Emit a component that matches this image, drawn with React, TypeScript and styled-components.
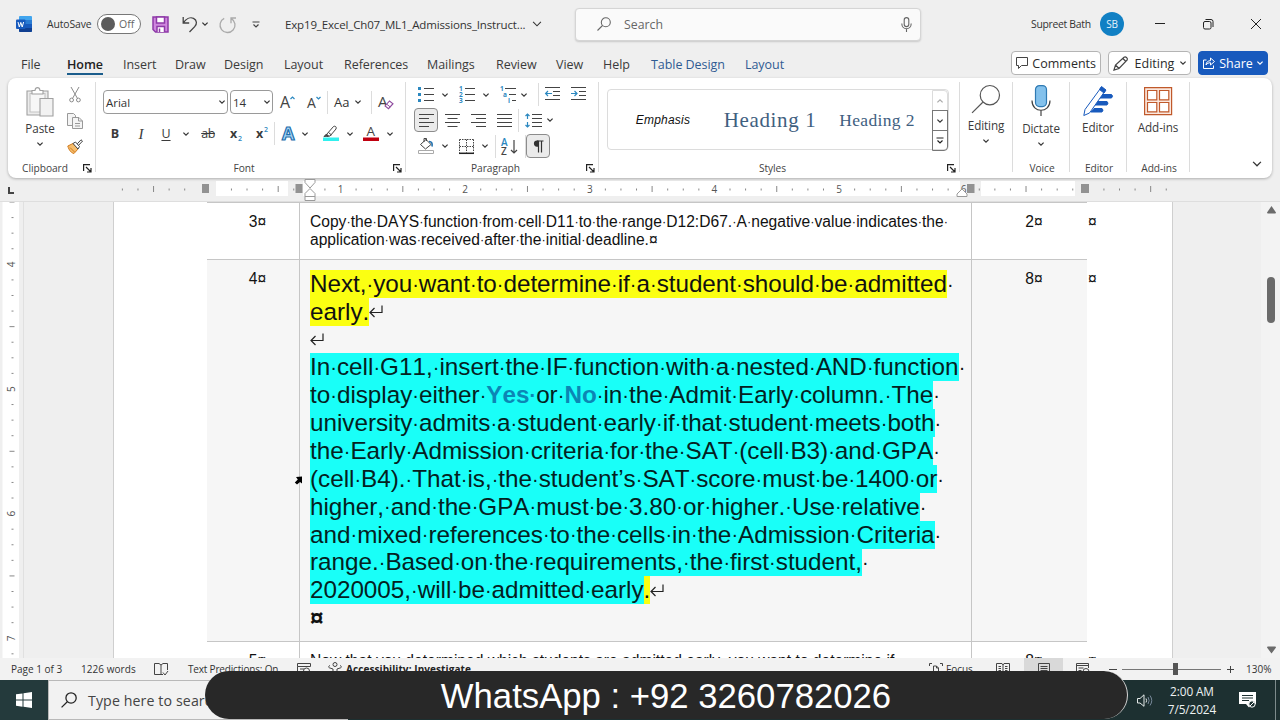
import styled, { createGlobalStyle, css } from 'styled-components';
import type { ReactNode } from 'react';

const GlobalStyle = createGlobalStyle`
  * {
    box-sizing: border-box;
  }
  body {
    margin: 0;
    overflow: hidden;
    background: #efefef;
    font-family: 'Open Sans', 'Noto Sans', sans-serif;
    color: #333;
  }
  svg {
    display: block;
    flex: none;
    overflow: visible;
  }
`;

const Window = styled.div`
  position: relative;
  width: 1280px;
  height: 720px;
  display: flex;
  flex-direction: column;
  overflow: hidden;
  background: #efefef;
`;

const Row = styled.div<{ $h?: number }>`
  display: flex;
  align-items: center;
  height: ${(p) => (p.$h ? `${p.$h}px` : 'auto')};
`;

// fixed width slot, keeps toolbars aligned whatever the label is
const Slot = styled.div<{ $w: number; $ml?: number; $left?: boolean }>`
  flex: none;
  width: ${(p) => p.$w}px;
  margin-left: ${(p) => p.$ml ?? 0}px;
  display: flex;
  align-items: center;
  justify-content: ${(p) => (p.$left ? 'flex-start' : 'center')};
  white-space: nowrap;
`;

const Label = styled.span<{ $size?: number; $ls?: number; $color?: string }>`
  font-size: ${(p) => p.$size ?? 12.3}px;
  letter-spacing: ${(p) => p.$ls ?? 0}px;
  color: ${(p) => p.$color ?? '#333'};
  white-space: nowrap;
`;

/* ---------- title bar ---------- */

const TitleBar = styled.header`
  height: 48px;
  flex: none;
  display: flex;
  align-items: center;
  padding-left: 16px;
`;

const Toggle = styled.div`
  width: 44px;
  height: 20px;
  border: 1px solid #777;
  border-radius: 10px;
  background: #fff;
  display: flex;
  align-items: center;
  gap: 4px;
  padding-left: 3px;
  font-size: 10.5px;
  color: #666;

  &::before {
    content: '';
    width: 14px;
    height: 14px;
    border-radius: 50%;
    background: #5c5c5c;
  }
`;

const SearchBox = styled.div`
  width: 346px;
  height: 33px;
  margin-left: 32px;
  padding: 0 8px 0 21px;
  display: flex;
  align-items: center;
  background: #fafafa;
  border: 1px solid #d5d5d5;
  border-radius: 4px;
  box-shadow: 0 1px 2px rgba(0, 0, 0, 0.16);

  span {
    flex: 1;
    margin-left: 13px;
  }
`;

const Avatar = styled.div`
  width: 24px;
  height: 24px;
  margin-left: 8px;
  border-radius: 50%;
  background: #1180c4;
  color: #e4f2fb;
  font-size: 10px;
  letter-spacing: -0.2px;
  display: flex;
  align-items: center;
  justify-content: center;
`;

/* ---------- tabs ---------- */

const TabBar = styled.nav`
  height: 30px;
  flex: none;
  display: flex;
  align-items: center;
`;

const Tabs = styled.div`
  width: 990px;
  padding-left: 21px;
  display: grid;
  grid-template-columns: 46px 56px 52px 49px 60px 60px 83px 69px 60px 47px 48px 94px 60px;
`;

const Tab = styled.div<{ $active?: boolean; $context?: boolean }>`
  justify-self: start;
  height: 23px;
  line-height: 25px;
  font-size: 12.5px;
  white-space: nowrap;
  letter-spacing: -0.05px;
  color: ${(p) => (p.$context ? '#2f5b93' : '#3b3b3b')};
  ${(p) =>
    p.$active &&
    css`
      font-weight: 600;
      color: #222;
      letter-spacing: -0.05px;
      border-bottom: 2px solid #1b5d8c;
    `}
`;

const ActionButton = styled.div<{ $w: number; $ml: number; $primary?: boolean }>`
  width: ${(p) => p.$w}px;
  height: 24px;
  margin-left: ${(p) => p.$ml}px;
  padding: 0 4px;
  display: flex;
  align-items: center;
  justify-content: space-between;
  border: 1px solid ${(p) => (p.$primary ? '#185abd' : '#b4b4b4')};
  border-radius: 4px;
  background: ${(p) => (p.$primary ? '#185abd' : '#fff')};
  color: ${(p) => (p.$primary ? '#fff' : '#2b2b2b')};
  font-size: 12.5px;
  white-space: nowrap;
`;

/* ---------- ribbon ---------- */

const Ribbon = styled.section`
  height: 100px;
  flex: none;
  margin: 0 8px;
  display: grid;
  grid-template-columns: 88px 310px 193px 361px 53px 57px 57px 63px 1fr;
  background: #fff;
  border-radius: 8px;
  box-shadow: 0 1px 3px rgba(0, 0, 0, 0.28);
`;

const GroupBox = styled.div`
  height: 90px;
  margin-top: 4px;
  display: flex;
  flex-direction: column;
  border-right: 1px solid #dcdcdc;
`;

const GroupBody = styled.div`
  height: 78px;
  flex: none;
  display: flex;
  flex-direction: column;
`;

const GroupFooter = styled.div`
  height: 16px;
  display: grid;
  grid-template-columns: 1fr auto;
  align-items: center;
  padding-left: 2px;
  font-size: 10.2px;
  line-height: 16px;
  letter-spacing: -0.05px;
  text-align: center;
  color: #444;
`;

const BigButton = styled.div<{ $top?: number; $gap?: number }>`
  display: flex;
  flex-direction: column;
  align-items: center;
  padding-top: ${(p) => p.$top ?? 0}px;
  font-size: 11.7px;
  line-height: 17px;
  letter-spacing: -0.1px;
  color: #3b3b3b;
  white-space: nowrap;

  span {
    margin-top: ${(p) => p.$gap ?? 2}px;
  }
  span + svg {
    margin-top: 5px;
  }
`;

const ClipboardBody = styled.div`
  display: grid;
  grid-template-columns: 64px 6px;
  height: 78px;
`;

const IconStack = styled.div`
  display: flex;
  flex-direction: column;
  align-items: center;
  gap: 10px;
  padding-top: 5px;
`;

const Combo = styled.div<{ $w: number; $ml: number }>`
  width: ${(p) => p.$w}px;
  height: 24px;
  flex: none;
  margin-left: ${(p) => p.$ml}px;
  padding: 0 2px;
  display: flex;
  align-items: center;
  justify-content: space-between;
  border: 1px solid #9a9a9a;
  border-radius: 4px;
  font-size: 11.5px;
`;

const Divider = styled.div<{ $ml?: number }>`
  width: 1px;
  height: 23px;
  flex: none;
  margin-left: ${(p) => p.$ml ?? 0}px;
  background: #dcdcdc;
`;

const Pressed = styled.div`
  width: 24px;
  height: 24px;
  display: flex;
  align-items: center;
  justify-content: center;
  border: 1px solid #8c8c8c;
  border-radius: 4px;
  background: #ebebeb;
`;

const Glyph = styled.span<{ $kind?: 'bold' | 'italic' | 'underline' | 'strike' }>`
  font-size: 12.5px;
  line-height: 16px;
  color: #3b3b3b;
  ${(p) => p.$kind === 'bold' && 'font-weight: 700;'}
  ${(p) => p.$kind === 'italic' && "font-style: italic; font-family: 'Liberation Serif', serif; font-size: 15px;"}
  ${(p) => p.$kind === 'underline' && 'text-decoration: underline; text-underline-offset: 2px;'}
  ${(p) => p.$kind === 'strike' && 'text-decoration: line-through; letter-spacing: -0.5px;'}

  sub,
  sup {
    font-size: 7px;
    line-height: 0;
    font-weight: 600;
    color: #2b88c0;
    margin-left: 1px;
  }
`;

const Gallery = styled.div`
  width: 342px;
  height: 61px;
  margin: 7px 0 0 8px;
  display: grid;
  grid-template-columns: 110px 104px 110px 16px;
  border: 1px solid #dcdcdc;
  border-radius: 4px;
  align-items: center;
  justify-items: center;
`;

const GalleryScroll = styled.div`
  width: 16px;
  height: 61px;
  display: grid;
  grid-template-rows: 21px 20px 20px;

  div {
    display: flex;
    align-items: center;
    justify-content: center;
    border: 1px solid #777;
    margin-top: -1px;
  }
  div:first-child {
    margin-top: 0;
    border-color: #dcdcdc;
    border-radius: 0 4px 0 0;
  }
  div:last-child {
    border-radius: 0 0 4px 0;
  }
`;

const StyleName = styled.span<{ $size: number; $ls: number; $serif?: boolean }>`
  font-family: ${(p) => (p.$serif ? "'Liberation Serif', serif" : "'Liberation Sans', sans-serif")};
  font-size: ${(p) => p.$size}px;
  letter-spacing: ${(p) => p.$ls}px;
  font-style: ${(p) => (p.$serif ? 'normal' : 'italic')};
  color: ${(p) => (p.$serif ? '#3f607f' : '#111')};
  padding-bottom: ${(p) => (p.$serif ? 0 : 2)}px;
  white-space: nowrap;
`;

/* ---------- document ---------- */

const Workspace = styled.main`
  height: 457px;
  flex: none;
  display: flex;
  overflow: hidden;
  border-top: 1px solid #dedede;
`;

const SideRuler = styled.div`
  width: 24px;
  flex: none;
  border-right: 1px solid #e0e0e0;
`;

const Page = styled.article`
  width: 1060px;
  flex: none;
  margin-left: 89px;
  padding-left: 93px;
  background: #fff;
  border: 1px solid #cfcfcf;
  border-width: 0 1px;
`;

const TableRow = styled.div<{ $h: number; $shade?: boolean }>`
  height: ${(p) => p.$h}px;
  display: grid;
  grid-template-columns: 880px 1fr;
  font-family: 'Liberation Sans', Arial, sans-serif;
  font-size: 15.6px;
  font-kerning: none;
  line-height: 18px;
  color: #111;

  > div:first-child {
    display: grid;
    grid-template-columns: 93px 672px 115px;
    border-top: 1px solid #c6c6c6;
    background: ${(p) => (p.$shade ? '#f6f6f6' : '#fff')};
  }
`;

const Cell = styled.div<{ $body?: boolean }>`
  padding-top: 10px;
  text-align: ${(p) => (p.$body ? 'left' : 'center')};
  padding-left: ${(p) => (p.$body ? 10 : 9)}px;
  border-right: 1px solid #c6c6c6;
  white-space: nowrap;

  &:last-child {
    border-right: none;
  }
`;

const RowEnd = styled.div`
  padding: 11px 0 0 1px;
`;

const Dot = styled.span`
  margin: 0 0.003em;
  font-size: 0.82em;
  line-height: 0;
  vertical-align: 0.06em;
`;

const Line = styled.div<{ $ls?: number }>`
  height: 27.85px;
  display: flex;
  align-items: center;
  font-size: 24.27px;
  line-height: 27.85px;
  letter-spacing: ${(p) => p.$ls ?? 0}px;
`;

const SmallLine = styled.div`
  height: 18px;
`;

const Mark = styled.span<{ $tone: 'yellow' | 'cyan' }>`
  height: 28px;
  background: ${(p) => (p.$tone === 'yellow' ? '#fbff12' : '#19fff8')};
  color: ${(p) => (p.$tone === 'yellow' ? '#111' : '#04211f')};
`;

const Keyword = styled.b`
  color: #0c86b4;
`;

const ScrollBar = styled.div`
  width: 19px;
  margin-left: auto;
  padding: 4px 0 4px 1px;
  display: flex;
  flex-direction: column;
  align-items: center;
  background: #f3f3f3;
`;

const Thumb = styled.div`
  width: 8px;
  height: 46px;
  margin: 63px 0 auto;
  border-radius: 4px;
  background: #6b6b6b;
`;

const Pointer = styled.div`
  position: absolute;
  left: 294px;
  top: 475px;
`;

/* ---------- status bar and taskbar ---------- */

const StatusBar = styled.footer`
  height: 22px;
  flex: none;
  display: flex;
  align-items: center;
  padding-left: 11px;
  background: #f2f2f2;
`;

const ActiveView = styled.div`
  width: 39px;
  height: 22px;
  margin-left: 14px;
  display: flex;
  align-items: center;
  justify-content: center;
  background: #d9d9d9;
`;

const ZoomTrack = styled.div`
  width: 99px;
  height: 12px;
  margin: 0 5px;
  display: flex;
  align-items: center;
  padding-left: 51px;
  background: linear-gradient(#777, #777) center / 100% 1px no-repeat;

  &::before {
    content: '';
    width: 5px;
    height: 12px;
    background: #555;
  }
`;

const TaskBar = styled.footer`
  height: 40px;
  flex: none;
  display: flex;
  background: #1d3031;
`;

const StartButton = styled.div`
  width: 48px;
  display: flex;
  align-items: center;
  justify-content: center;
  background: #243a3c;
`;

const TaskSearch = styled.div`
  width: 300px;
  padding-left: 12px;
  display: flex;
  align-items: center;
  gap: 11px;
  background: #f2f2f2;
  border: 1px solid #b9b9b9;
  border-right: none;
`;

const Tray = styled.div`
  margin-left: auto;
  display: flex;
  align-items: center;
  color: #eef2f2;
`;

const Clock = styled.div`
  width: 56px;
  margin-left: 11px;
  font-size: 11.8px;
  line-height: 18.5px;
  letter-spacing: -0.1px;
  text-align: center;
  white-space: nowrap;
`;

const Banner = styled.div`
  position: absolute;
  left: 205px;
  top: 671px;
  width: 923px;
  height: 48px;
  display: flex;
  align-items: center;
  justify-content: center;
  border-radius: 24px;
  background: #282828;
  border-right: 1px solid #d8d8d8;
  font-family: 'Liberation Sans', Arial, sans-serif;
  font-size: 34.7px;
  color: #fff;
  padding-top: 3px;
`;

/* ---------- icons ---------- */

type SvgProps = { w: number; h: number; children: ReactNode; stroke?: string; sw?: number };

const Svg = ({ w, h, children, stroke = '#444', sw = 1 }: SvgProps) => (
  <svg width={w} height={h} viewBox={`0 0 ${w} ${h}`} fill="none" stroke={stroke} strokeWidth={sw}>
    {children}
  </svg>
);

const Chevron = ({ w = 6, color = '#333', sw = 1.2, up = false }) => (
  <svg width={w} height={w / 2 + 1} viewBox="0 0 6 4" fill="none" stroke={color} strokeWidth={(sw * 6) / w}>
    <path d={up ? 'M.4 3.4 3 .8l2.6 2.6' : 'M.4.6 3 3.2 5.6.6'} />
  </svg>
);

const WordLogo = () => (
  <Svg w={16} h={16} stroke="none">
    <rect x="3" width="13" height="16" rx="1" fill="#41a5ee" />
    <path d="M3 4h13v4H3z" fill="#2b7cd3" />
    <path d="M3 8h13v4H3z" fill="#185abd" />
    <path d="M3 12h13v3a1 1 0 0 1-1 1H4a1 1 0 0 1-1-1z" fill="#103f91" />
    <rect y="3.5" width="9.5" height="9.5" rx="1" fill="#185abd" />
    <path d="m2 6 1.3 5 1.5-4.6L6.2 11 7.6 6" stroke="#fff" />
  </Svg>
);

const SaveIcon = () => (
  <Svg w={17} h={17} stroke="#8e3aa8" sw={1.5}>
    <path d="M1 1h15v15H3.5L1 13.5z" fill="#cf87de" />
    <path d="M4.5 1h8v6h-8z" fill="#fff" />
    <path d="M5 16v-5.5h7.5V16" fill="#fff" />
    <path d="M7.5 12.5V16" />
  </Svg>
);

const UndoIcon = () => (
  <Svg w={16} h={17} sw={1.3}>
    <path d="M1.2 1v6h6M1.5 6.7C4 2.8 8 .8 11.500 2.300c3.7 1.7 3.600 6 1.200 8.300L7.500 16" />
  </Svg>
);

const RedoIcon = () => (
  <Svg w={17} h={17} stroke="#aaa" sw={1.3}>
    <path d="M5.2 2.3a7.500 7.500 0 1 0 7.200.3M12 7.300V2h5" />
  </Svg>
);

const SearchIcon = ({ size = 14, color = '#666', sw = 1.1 }) => (
  <svg width={size} height={size} viewBox="0 0 14 14" fill="none" stroke={color} strokeWidth={sw}>
    <circle cx="8.8" cy="5.2" r="4.5" />
    <path d="M5.5 8.500.5 13.500" />
  </svg>
);

const MicIcon = () => (
  <Svg w={11} h={15} stroke="#666" sw={1.1}>
    <rect x="3.2" y=".6" width="4.6" height="9" rx="2.3" />
    <path d="M.8 6.500c0 7 9.400 7 9.400 0M5.500 11.800V15" />
  </Svg>
);

const PasteIcon = () => (
  <Svg w={28} h={30} stroke="#a0a0a0" sw={1.1}>
    <path d="M1 4h21v24H1z" fill="#ececec" />
    <path d="M4 6.500h15V25H4z" fill="#f7f7f7" stroke="#c4c4c4" />
    <path d="M6 7V3.500h3C9.500-.3 13.500-.3 14 3.500h3V7z" fill="#fff" />
    <path d="M14 11.500h13V29H14z" fill="#f2f2f2" />
  </Svg>
);

const CutIcon = () => (
  <Svg w={12} h={16} stroke="#8a8a8a">
    <path d="M2 0l6.500 11.500M10 0 3.500 11.500" />
    <circle cx="2.600" cy="13" r="1.900" />
    <circle cx="9.400" cy="13" r="1.900" />
  </Svg>
);

const CopyIcon = () => (
  <Svg w={16} h={16} stroke="#999">
    <path d="M5 12.500H.5V.5h6l2 2v2" fill="#f4f4f4" />
    <path d="M5.500 4.500H12L15.500 8v7.500h-10z" fill="#f4f4f4" />
    <path d="M11.500 4.500V8h4M8 10.500h5M8 13h5" />
  </Svg>
);

const PainterIcon = () => (
  <Svg w={16} h={15}>
    <path d="M.8 7 6 4.500l5 5.500-4 4.500C4.500 14 2 11.500.8 7z" fill="#f6bd6c" stroke="#d27b1d" />
    <path d="M3 8.500 7.500 13" stroke="#d27b1d" />
    <path d="M6 4.500 8.500 3l4 4.500L11 10zM10.300 4.800 14 .8l1.500 1.300-3.700 4" fill="#fff" />
  </Svg>
);

const Launcher = () => (
  <Svg w={9} h={9} stroke="#222" sw={1.2}>
    <path d="M.6 7V.6H7M3 3l4.500 4.500M8 4v4H4" />
  </Svg>
);

const ShrinkGrow = ({ grow = false }) => (
  <Svg w={16} h={16} stroke="none">
    <text x="0" y="14" fontSize={grow ? 16 : 14} fill="#444">
      A
    </text>
    <path d={grow ? 'M10.500 5 12.500 3l2 2' : 'M9.500 3l2 2 2-2'} stroke="#2b88c0" strokeWidth="1.200" />
  </Svg>
);

const ClearIcon = () => (
  <Svg w={16} h={16} stroke="none">
    <text x="0" y="12.500" fontSize="15" fill="#444">
      A
    </text>
    <path d="m7 12 4.500-5 3.500 2.700-4.500 5z" fill="#fff" stroke="#8e4a9e" strokeWidth="1.100" />
    <path d="m8.700 10.200 3.500 2.700" stroke="#8e4a9e" />
  </Svg>
);

const EffectsIcon = () => (
  <Svg w={15} h={15} stroke="#1f6fae" sw={1.2}>
    <text x="1" y="14" fontSize="18" fontWeight="700" fill="#a9d6f5">
      A
    </text>
  </Svg>
);

const HighlightIcon = () => (
  <Svg w={16} h={17}>
    <path d="M3.500 9.500 10.500 1.500c1.500-1 3.500.5 2.500 2.500L7 11l-3 .5zM5.500 7.500l3 2.500" fill="#fff" />
    <path d="M1 11.500 3.500 9l2 2z" fill="#444" />
    <path d="M0 12.500h16V16H0z" fill="#30f0ee" stroke="none" />
  </Svg>
);

const FontColorIcon = () => (
  <Svg w={16} h={17} stroke="none">
    <text x="3.500" y="11" fontSize="13.500" fill="#444">
      A
    </text>
    <path d="M0 12.500h16V16H0z" fill="#c00010" />
  </Svg>
);

const BulletsIcon = () => (
  <Svg w={16} h={16}>
    <path d="M6 1.500h10M6 7.500h10M6 13.500h10" />
    <path d="M0 0h3v3H0zM0 6h3v3H0zM0 12h3v3H0z" fill="#2b88c0" stroke="none" />
  </Svg>
);

const NumberIcon = () => (
  <Svg w={16} h={16}>
    <path d="M6 1.500h10M6 7.500h10M6 13.500h10" />
    <g fill="#2b88c0" stroke="none" fontSize="6.500" fontWeight="700">
      <text x="0" y="4">1</text>
      <text x="0" y="10">2</text>
      <text x="0" y="16">3</text>
    </g>
  </Svg>
);

const MultiIcon = () => (
  <Svg w={16} h={16}>
    <path d="M5 1.500h11M9 7.500h7M12 13.500h4" />
    <g fill="#2b88c0" stroke="none" fontSize="6.500" fontWeight="700">
      <text x="0" y="4">1</text>
      <text x="3" y="10">a</text>
      <text x="8" y="16">i</text>
    </g>
  </Svg>
);

const IndentIcon = ({ out = false }) => (
  <Svg w={15} h={15}>
    <path d="M0 .5h15M8 4.500h7M8 8.500h7M0 12.500h15" />
    <path d={out ? 'M7 6.500H.7M3 4 .6 6.500 3 9' : 'M0 6.500h6M3.500 4 6 6.500 3.500 9'} stroke="#2b88c0" strokeWidth="1.200" />
  </Svg>
);

const aligns = {
  left: 'M0 1.500h15M0 5.500h10M0 9.500h15M0 13.500h10',
  center: 'M0 1.500h15M2.500 5.500h10M0 9.500h15M2.500 13.500h10',
  right: 'M0 1.500h15M5 5.500h10M0 9.500h15M5 13.500h10',
  full: 'M0 1.500h15M0 5.500h15M0 9.500h15M0 13.500h15',
};

const AlignIcon = ({ kind }: { kind: keyof typeof aligns }) => (
  <Svg w={15} h={15}>
    <path d={aligns[kind]} />
  </Svg>
);

const SpacingIcon = () => (
  <Svg w={17} h={15}>
    <path d="M7 1.500h10M7 5.500h10M7 9.500h10M7 13.500h10" />
    <path d="M2.500 6V1M.5 3l2-2 2 2M2.500 9v5M.5 12l2 2 2-2" stroke="#2b88c0" strokeWidth="1.200" />
  </Svg>
);

const BucketIcon = () => (
  <Svg w={16} h={16}>
    <path d="M2.500 6.500 8 1.500l5 5L7.500 11zM6 4V.5h2.500V3" />
    <path d="M11 3.500c3 0 3.500 2 3 5" stroke="#1f6fae" strokeWidth="1.600" />
    <path d="M.5 12.500h15v3H.5z" fill="#fff" stroke="#aaa" />
  </Svg>
);

const BordersIcon = () => (
  <Svg w={15} h={15}>
    <path d="M.5.5h14M.5 7.500h14M.5.5v13M7.500.5v13M14.500.5v13" strokeDasharray="1.500 1" />
    <path d="M0 14.300h15" strokeWidth="1.500" stroke="#222" />
  </Svg>
);

const SortIcon = () => (
  <Svg w={17} h={17}>
    <text x="0" y="8" fontSize="10" fontWeight="600" fill="#2b88c0" stroke="none">A</text>
    <text x="0" y="16.500" fontSize="10" fontWeight="600" fill="#444" stroke="none">Z</text>
    <path d="M13 2v13M10 12l3 3 3-3" strokeWidth="1.200" />
  </Svg>
);

const PilcrowIcon = () => (
  <Svg w={11} h={13} stroke="#333" sw={1.2}>
    <path d="M10.500 1H4M5.500 1v11.500M8.500 1v11.500" />
    <path d="M5.500.5H4a3 3 0 0 0 0 6.200h1.500z" fill="#333" stroke="none" />
  </Svg>
);

const DictateIcon = () => (
  <Svg w={20} h={32} sw={1.2}>
    <rect x="4.500" y=".6" width="11" height="21" rx="4" fill="#83c1ec" stroke="#2f7ab3" />
    <path d="M1 15.500c0 13 18 13 18 0M10 25.500V31" />
  </Svg>
);

const EditorIcon = () => (
  <Svg w={30} h={31} stroke="#185abd">
    <path d="M17 8.500h11.500q2 1.500 0 3.500H15zM14 15.500h10q2 1.500 0 3.500H12zM11 22.500h8q2 1.500 0 3.500H8z" fill="#185abd" />
    <path d="M18.500 1 22 5 6.500 27 .8 29.500 2 23.500z" fill="#fff" />
    <path d="m16.500 3.500 2-3L23 4l-2 3z" fill="#185abd" />
  </Svg>
);

const AddinsIcon = () => (
  <Svg w={28} h={28} stroke="#c0592b" sw={1.2}>
    <path d="M.6.6h27v27H.6z" fill="#fbe8df" />
    <path d="M3.500 3.500h9.300v9.300H3.500zM15.500 3.500h9.300v9.300h-9.300zM3.500 15.500h9.300v9.300H3.500zM15.500 15.500h9.300v9.300h-9.300z" fill="#fff" />
  </Svg>
);

const CommentIcon = () => (
  <Svg w={12} h={12}>
    <path d="M.5.500h11v8h-6l-3 3v-3h-2z" />
  </Svg>
);

const PenIcon = () => (
  <Svg w={16} h={15} sw={1.2}>
    <path d="m1 14 1.500-5L11 1.200c1.700-1 4 .8 3.200 2.800L6 12.500zM2.500 9 6 12.500M9.800 2.500l3.500 3.300" />
  </Svg>
);

const ShareIcon = () => (
  <Svg w={12} h={12} stroke="#fff">
    <path d="M3.500 3H.5v8.500h10V8.500M3 8c.3-3 2-4.300 4.500-4.300V1L11.500 4.500 7.500 8V5.700C5.500 5.700 4 6.500 3 8z" />
  </Svg>
);

const ReturnMark = () => (
  <Svg w={14} h={13} stroke="#222" sw={1.2}>
    <path d="M13 .5V7.500H1.500M5.500 3 1 7.500 5.500 12" />
  </Svg>
);

const tickAt = (n: number) => 340.5 + n * 15.58;
// ticks covered by the column markers
const hidden = [-9, -8, -2, 40];

const TopRuler = () => (
  <svg width="1280" height="23" viewBox="0 178 1280 23" fill="none">
    <path d="M216 181h72v15h-72zM303 181h657v15H303zM981 181h94v15h-94z" fill="#fff" />
    {Array.from({ length: 68 }, (_, i) => i - 14).map((n) => {
      if (hidden.includes(n)) return null;
      if (n % 8 === 0 && n >= 0)
        return (
          <text key={n} x={tickAt(n)} y="193" fontSize="10" textAnchor="middle" fill="#555">
            {n / 8 + 1 < 7 ? n / 8 + 1 : ''}
          </text>
        );
      const tall = Math.abs(n % 8) === 4;
      return <rect key={n} x={tickAt(n) - 0.5} y={tall ? 186 : 188.5} width="1" height={tall ? 6 : 2} fill="#888" />;
    })}
    <text x="963.500" y="193" fontSize="10" textAnchor="middle" fill="#555">6</text>
    <path d="M202 184h7v9h-7zM295.500 184h7v9h-7zM967 184h7.500v9H967zM1081 184h8v9h-8z" fill="#929292" />
    <path
      d="M305 179.500h10v3l-5 5.500-5-5.500zM305 200.500h10v-7l-5-5-5 5zM305 196.500h10M957 196.500v-2.500l5-5 5 5v2.500z"
      fill="#fff"
      stroke="#9a9a9a"
    />
    <path d="M9 187v6h5" stroke="#444" strokeWidth="2" />
  </svg>
);

const LeftRuler = () => (
  <svg width="22" height="457" viewBox="0 202 22 457" fill="none">
    <path d="M2.500 202H19v457H2.500z" fill="#fff" />
    {Array.from({ length: 30 }, (_, i) => i).map((n) => {
      const y = 202 + n * 15.58;
      if (n % 8 === 4)
        return (
          <text key={n} transform={`translate(15 ${y + 3}) rotate(-90)`} fontSize="10" fill="#555">
            {(n - 4) / 8 + 4}
          </text>
        );
      return <rect key={n} x={n % 8 === 0 ? 9.5 : 11.5} y={y - 0.5} width={n % 8 === 0 ? 5 : 2} height="1" fill="#888" />;
    })}
  </svg>
);

/* ---------- pieces ---------- */

// spaces are shown as formatting dots, with the width of a space
const Dotted = ({ text }: { text: string }) => (
  <>
    {text.split(/( )/).map((part, i) => (part === ' ' ? <Dot key={i}>·</Dot> : part))}
  </>
);

const Group = ({ label, launcher, children }: { label?: string; launcher?: boolean; children: ReactNode }) => (
  <GroupBox>
    <GroupBody>{children}</GroupBody>
    <GroupFooter>
      <span>{label}</span>
      {launcher && (
        <Slot $w={15}>
          <Launcher />
        </Slot>
      )}
    </GroupFooter>
  </GroupBox>
);

const tabs = ['File', 'Home', 'Insert', 'Draw', 'Design', 'Layout', 'References', 'Mailings', 'Review', 'View', 'Help'];

const cyanLines = [
  'university admits a student early if that student meets both',
  'the Early Admission criteria for the SAT (cell B3) and GPA',
  '(cell B4). That is, the student’s SAT score must be 1400 or',
  'higher, and the GPA must be 3.80 or higher. Use relative',
  'and mixed references to the cells in the Admission Criteria',
  'range. Based on the requirements, the first student,',
];

function App() {
  return (
    <>
      <GlobalStyle />
      <Window>
        <TitleBar>
          <WordLogo />
          <Slot $w={45} $ml={15} $left>
            <Label $size={10.4} $ls={-0.1}>
              AutoSave
            </Label>
          </Slot>
          <Slot $w={44} $ml={5}>
            <Toggle>Off</Toggle>
          </Slot>
          <Slot $w={17} $ml={11}>
            <SaveIcon />
          </Slot>
          <Slot $w={16} $ml={13}>
            <UndoIcon />
          </Slot>
          <Slot $w={6} $ml={4}>
            <Chevron />
          </Slot>
          <Slot $w={17} $ml={11}>
            <RedoIcon />
          </Slot>
          <Slot $w={8} $ml={16}>
            <Svg w={8} h={7} sw={1.2}>
              <path d="M.5 1h7M1.500 3.500 4 6l2.500-2.500" />
            </Svg>
          </Slot>
          <Slot $w={242} $ml={25} $left>
            <Label $size={11.5} $ls={-0.15}>
              Exp19_Excel_Ch07_ML1_Admissions_Instruct...
            </Label>
          </Slot>
          <Slot $w={11} $ml={4}>
            <Chevron w={10} />
          </Slot>
          <Slot $w={1} />
          <SearchBox>
            <SearchIcon />
            <Label $color="#666">Search</Label>
            <MicIcon />
          </SearchBox>
          <Slot $w={61} $ml={110} $left>
            <Label $size={10.4} $ls={-0.3}>
              Supreet Bath
            </Label>
          </Slot>
          <Avatar>SB</Avatar>
          <Slot $w={10} $ml={31}>
            <Svg w={10} h={2} stroke="#222">
              <path d="M0 .5h10" />
            </Svg>
          </Slot>
          <Slot $w={10} $ml={38}>
            <Svg w={10} h={10} stroke="#222">
              <rect x=".5" y="2.500" width="7.500" height="7.500" rx="1.500" />
              <path d="M2.500.5H8a2 2 0 0 1 2 2V8" />
            </Svg>
          </Slot>
          <Slot $w={10} $ml={38}>
            <Svg w={10} h={10} stroke="#222">
              <path d="m0 0 10 10M10 0 0 10" />
            </Svg>
          </Slot>
        </TitleBar>

        <TabBar>
          <Tabs>
            {tabs.map((name) => (
              <Tab key={name} $active={name === 'Home'}>
                {name}
              </Tab>
            ))}
            <Tab $context>Table Design</Tab>
            <Tab $context>Layout</Tab>
          </Tabs>
          <ActionButton $w={90} $ml={21}>
            <CommentIcon />
            Comments
          </ActionButton>
          <ActionButton $w={83} $ml={7}>
            <PenIcon />
            Editing
            <Chevron />
          </ActionButton>
          <ActionButton $w={70} $ml={7} $primary>
            <ShareIcon />
            Share
            <Chevron color="#fff" />
          </ActionButton>
        </TabBar>

        <Ribbon>
          <Group label="Clipboard" launcher>
            <ClipboardBody>
              <BigButton $top={5} $gap={3}>
                <PasteIcon />
                <span>Paste</span>
                <Chevron />
              </BigButton>
              <IconStack>
                <CutIcon />
                <CopyIcon />
                <PainterIcon />
              </IconStack>
            </ClipboardBody>
          </Group>

          <Group label="Font" launcher>
            <Row $h={40}>
              <Combo $w={125} $ml={7}>
                Arial
                <Chevron />
              </Combo>
              <Combo $w={43} $ml={2}>
                14
                <Chevron />
              </Combo>
              <Slot $w={16} $ml={7}>
                <ShrinkGrow grow />
              </Slot>
              <Slot $w={16} $ml={11}>
                <ShrinkGrow />
              </Slot>
              <Divider $ml={4} />
              <Slot $w={18} $ml={6} $left>
                <Label $size={13}>Aa</Label>
              </Slot>
              <Slot $w={8} $ml={2}>
                <Chevron />
              </Slot>
              <Divider $ml={9} />
              <Slot $w={16} $ml={6}>
                <ClearIcon />
              </Slot>
            </Row>
            <Row $h={23}>
              <Slot $w={24} $ml={7}>
                <Glyph $kind="bold">B</Glyph>
              </Slot>
              <Slot $w={28}>
                <Glyph $kind="italic">I</Glyph>
              </Slot>
              <Slot $w={22}>
                <Glyph $kind="underline">U</Glyph>
              </Slot>
              <Slot $w={18}>
                <Chevron />
              </Slot>
              <Slot $w={26}>
                <Glyph $kind="strike">ab</Glyph>
              </Slot>
              <Slot $w={30}>
                <Glyph $kind="bold">
                  x<sub>2</sub>
                </Glyph>
              </Slot>
              <Slot $w={22}>
                <Glyph $kind="bold">
                  x<sup>2</sup>
                </Glyph>
              </Slot>
              <Divider $ml={1} />
              <Slot $w={24} $ml={1}>
                <EffectsIcon />
              </Slot>
              <Slot $w={10}>
                <Chevron />
              </Slot>
              <Slot $w={26} $ml={8}>
                <HighlightIcon />
              </Slot>
              <Slot $w={12}>
                <Chevron />
              </Slot>
              <Slot $w={26} $ml={2}>
                <FontColorIcon />
              </Slot>
              <Slot $w={12}>
                <Chevron />
              </Slot>
            </Row>
          </Group>

          <Group label="Paragraph" launcher>
            <Row $h={25}>
              <Slot $w={24} $ml={8}>
                <BulletsIcon />
              </Slot>
              <Slot $w={14}>
                <Chevron />
              </Slot>
              <Slot $w={24} $ml={3}>
                <NumberIcon />
              </Slot>
              <Slot $w={14}>
                <Chevron />
              </Slot>
              <Slot $w={24} $ml={3}>
                <MultiIcon />
              </Slot>
              <Slot $w={8}>
                <Chevron />
              </Slot>
              <Divider $ml={10} />
              <Slot $w={15} $ml={6}>
                <IndentIcon out />
              </Slot>
              <Slot $w={15} $ml={11}>
                <IndentIcon />
              </Slot>
            </Row>
            <Row $h={26}>
              <Slot $w={24} $ml={8}>
                <Pressed>
                  <AlignIcon kind="left" />
                </Pressed>
              </Slot>
              <Slot $w={26} $ml={1}>
                <AlignIcon kind="center" />
              </Slot>
              <Slot $w={26}>
                <AlignIcon kind="right" />
              </Slot>
              <Slot $w={26}>
                <AlignIcon kind="full" />
              </Slot>
              <Divider $ml={1} />
              <Slot $w={17} $ml={6}>
                <SpacingIcon />
              </Slot>
              <Slot $w={8} $ml={4}>
                <Chevron />
              </Slot>
            </Row>
            <Row $h={26}>
              <Slot $w={24} $ml={8}>
                <BucketIcon />
              </Slot>
              <Slot $w={14}>
                <Chevron />
              </Slot>
              <Slot $w={24} $ml={2}>
                <BordersIcon />
              </Slot>
              <Slot $w={14}>
                <Chevron />
              </Slot>
              <Divider $ml={3} />
              <Slot $w={17} $ml={5}>
                <SortIcon />
              </Slot>
              <Divider $ml={7} />
              <Slot $w={24}>
                <Pressed>
                  <PilcrowIcon />
                </Pressed>
              </Slot>
            </Row>
          </Group>

          <Group label="Styles" launcher>
            <Gallery>
              <StyleName $size={12} $ls={0.2}>
                Emphasis
              </StyleName>
              <StyleName $size={21} $ls={0.65} $serif>
                Heading 1
              </StyleName>
              <StyleName $size={17.5} $ls={0.35} $serif>
                Heading 2
              </StyleName>
              <GalleryScroll>
                <div>
                  <Chevron color="#aaa" up />
                </div>
                <div>
                  <Chevron />
                </div>
                <div>
                  <Svg w={8} h={7} sw={1.2} stroke="#222">
                    <path d="M.5 1h7M1.500 3.500 4 6l2.500-2.500" />
                  </Svg>
                </div>
              </GalleryScroll>
            </Gallery>
          </Group>

          <Group>
            <BigButton $top={2} $gap={3}>
              <SearchIcon size={30} color="#555" sw={0.55} />
              <span>Editing</span>
              <Chevron />
            </BigButton>
          </Group>
          <Group label="Voice">
            <BigButton $top={3} $gap={3}>
              <DictateIcon />
              <span>Dictate</span>
              <Chevron />
            </BigButton>
          </Group>
          <Group label="Editor">
            <BigButton $top={4} $gap={2}>
              <EditorIcon />
              <span>Editor</span>
            </BigButton>
          </Group>
          <Group label="Add-ins">
            <BigButton $top={5} $gap={4}>
              <AddinsIcon />
              <span>Add-ins</span>
            </BigButton>
          </Group>
          <Row $h={172}>
            <Slot $w={12} $ml={61}>
              <Chevron w={10} sw={1.4} />
            </Slot>
          </Row>
        </Ribbon>

        <TopRuler />

        <Workspace>
          <SideRuler>
            <LeftRuler />
          </SideRuler>
          <Page>
            <TableRow $h={57}>
              <div>
                <Cell>3¤</Cell>
                <Cell $body>
                  <SmallLine>
                    <Dotted text="Copy the DAYS function from cell D11 to the range D12:D67. A negative value indicates the " />
                  </SmallLine>
                  <SmallLine>
                    <Dotted text="application was received after the initial deadline." />¤
                  </SmallLine>
                </Cell>
                <Cell>2¤</Cell>
              </div>
              <RowEnd>¤</RowEnd>
            </TableRow>
            <TableRow $h={382} $shade>
              <div>
                <Cell>4¤</Cell>
                <Cell $body>
                  <Line $ls={-0.04}>
                    <Mark $tone="yellow">
                      <Dotted text="Next, you want to determine if a student should be admitted" />
                    </Mark>
                    <Dot>·</Dot>
                  </Line>
                  <Line>
                    <Mark $tone="yellow">early.</Mark>
                    <ReturnMark />
                  </Line>
                  <Line>
                    <ReturnMark />
                  </Line>
                  <Line>
                    <Mark $tone="cyan">
                      <Dotted text="In cell G11, insert the IF function with a nested AND function" />
                    </Mark>
                    <Dot>·</Dot>
                  </Line>
                  <Line $ls={-0.02}>
                    <Mark $tone="cyan">
                      <Dotted text="to display either " />
                      <Keyword>
                        <Dotted text="Yes " />
                      </Keyword>
                      <Dotted text="or " />
                      <Keyword>No</Keyword>
                      <Dotted text=" in the Admit Early column. The" />
                    </Mark>
                    <Dot>·</Dot>
                  </Line>
                  {cyanLines.map((text) => (
                    <Line key={text} $ls={-0.02}>
                      <Mark $tone="cyan">
                        <Dotted text={text} />
                      </Mark>
                      <Dot>·</Dot>
                    </Line>
                  ))}
                  <Line $ls={-0.03}>
                    <Mark $tone="cyan">
                      <Dotted text="2020005, will be admitted early" />
                    </Mark>
                    <Mark $tone="yellow">.</Mark>
                    <ReturnMark />
                  </Line>
                  <Line>
                    <b>¤</b>
                  </Line>
                </Cell>
                <Cell>8¤</Cell>
              </div>
              <RowEnd>¤</RowEnd>
            </TableRow>
            <TableRow $h={60}>
              <div>
                <Cell>5¤</Cell>
                <Cell $body>
                  <Dotted text="Now that you determined which students are admitted early, you want to determine if " />
                </Cell>
                <Cell>8¤</Cell>
              </div>
              <RowEnd>¤</RowEnd>
            </TableRow>
          </Page>
          <ScrollBar>
            <Svg w={9} h={8} stroke="none">
              <path d="M4.500 0 9 6.500a1 1 0 0 1-1 1H1a1 1 0 0 1-1-1z" fill="#6b6b6b" />
            </Svg>
            <Thumb />
            <Svg w={9} h={8} stroke="none">
              <path d="M4.500 7.500 9 1.500a1 1 0 0 0-1-1H1a1 1 0 0 0-1 1z" fill="#6b6b6b" />
            </Svg>
          </ScrollBar>
        </Workspace>

        <StatusBar>
          <Slot $w={53} $left>
            <Label $size={10}>Page 1 of 3</Label>
          </Slot>
          <Slot $w={56} $ml={17} $left>
            <Label $size={10} $ls={0.05}>
              1226 words
            </Label>
          </Slot>
          <Slot $w={14} $ml={17}>
            <Svg w={14} h={12}>
              <path d="M7 2v9.500M9 11.500H.5V.500H5L7 2 9 .500h4.500V7M9 9.500l2 2.500 3-4" />
            </Svg>
          </Slot>
          <Slot $w={92} $ml={20} $left>
            <Label $size={10} $ls={-0.18}>
              Text Predictions: On
            </Label>
          </Slot>
          <Slot $w={14} $ml={17}>
            <Svg w={14} h={12}>
              <path d="M.5.500h13v3H.5zM.5 3.500v8h5M3 6h4M3 8.500h2" />
              <circle cx="9.500" cy="8" r="3" />
            </Svg>
          </Slot>
          <Slot $w={14} $ml={17}>
            <Svg w={14} h={14}>
              <circle cx="7" cy="2.500" r="2" />
              <path d="M2 3.500C0 4 .5 6 2 6l3 1v6M12 3.500c2 .5 1.500 2.500 0 2.500L9 7v6" />
            </Svg>
          </Slot>
          <Slot $w={126} $ml={4} $left>
            <Label $size={10} $ls={0.08} $color="#222">
              <b>Accessibility: Investigate</b>
            </Label>
          </Slot>
          <Slot $w={14} $ml={457}>
            <Svg w={14} h={13}>
              <path d="M3 .500H.5V3M11 .500h2.500V3M4.500 12V3h3l2 2v7M7.500 3v2h2" />
            </Svg>
          </Slot>
          <Slot $w={28} $ml={3} $left>
            <Label $size={10}>Focus</Label>
          </Slot>
          <Slot $w={14} $ml={22}>
            <Svg w={14} h={12}>
              <path d="M7 2v9.500M.5 11.500V.500H6L7 2 8 .500h5.500v11zM2.500 3.500h2.500M2.500 5.500h2.500M2.500 7.500h2.500M9 3.500h2.500M9 5.500h2.500M9 7.500h2.500" />
            </Svg>
          </Slot>
          <ActiveView>
            <Svg w={12} h={13}>
              <path d="M.5.500h11v12H.5zM2.500 3.500h7M2.500 5.500h7M2.500 7.500h7M2.500 9.500h7" />
            </Svg>
          </ActiveView>
          <Slot $w={14} $ml={13}>
            <Svg w={14} h={13}>
              <path d="M6 12.500H.5V.500h12V5M.5 2.500h12M2.500 5h5M2.500 7.500h3" />
              <circle cx="10" cy="8.500" r="3" />
            </Svg>
          </Slot>
          <Slot $w={8} $ml={19}>
            <Svg w={8} h={1}>
              <path d="M0 .5h8" />
            </Svg>
          </Slot>
          <ZoomTrack />
          <Slot $w={8}>
            <Svg w={7} h={7}>
              <path d="M0 3.500h7M3.500 0v7" />
            </Svg>
          </Slot>
          <Slot $w={28} $ml={12} $left>
            <Label $size={10}>130%</Label>
          </Slot>
        </StatusBar>

        <TaskBar>
          <StartButton>
            <Svg w={16} h={16} stroke="none">
              <path d="M0 2.300 6.500 1.400v6.200H0zM7.500 1.200 16 0v7.600H7.500zM0 8.500h6.500v6.200L0 13.800zM7.500 8.500H16V16l-8.500-1.200z" fill="#fff" />
            </Svg>
          </StartButton>
          <TaskSearch>
            <SearchIcon size={16} color="#222" sw={1.1} />
            <Label $size={14.2} $ls={0.1} $color="#444">
              Type here to search
            </Label>
          </TaskSearch>
          <Tray>
            <Svg w={16} h={13} stroke="#e5eaea">
              <path d="M.5 4.500h2.500L7 .800v11.500L3 9H.5z" />
              <path d="M9 4.500q1.200 2 0 4" />
              <path d="M11 3q2.300 3.500 0 7M13 1.500q3.500 5 0 10" stroke="#789" />
            </Svg>
            <Clock>
              2:00 AM
              <br />
              7/5/2024
            </Clock>
            <Slot $w={18} $ml={18}>
              <Svg w={17} h={16} stroke="none">
                <path d="M0 0h17v12h-4l-3 3.500L7 12H0z" fill="#fff" />
                <path d="M3 3.500h11M3 6h11M3 8.500h7" stroke="#1d3031" />
                <circle cx="13" cy="12" r="3.200" fill="#1d3031" stroke="#fff" />
                <path d="m11 14 4-4" stroke="#fff" />
              </Svg>
            </Slot>
            <Slot $w={1} $ml={19}>
              <Svg w={1} h={40} stroke="#7d8b8c">
                <path d="M.5 0v40" />
              </Svg>
            </Slot>
            <Slot $w={4} />
          </Tray>
        </TaskBar>

        <Pointer>
          <Svg w={9} h={10} stroke="none">
            <path d="M8 1.500v7L6 7 3 9.500.8 7.500 3.800 4.500 2 2z" fill="#000" />
          </Svg>
        </Pointer>
        <Banner>WhatsApp : +92 3260782026</Banner>
      </Window>
    </>
  );
}

export default App;
